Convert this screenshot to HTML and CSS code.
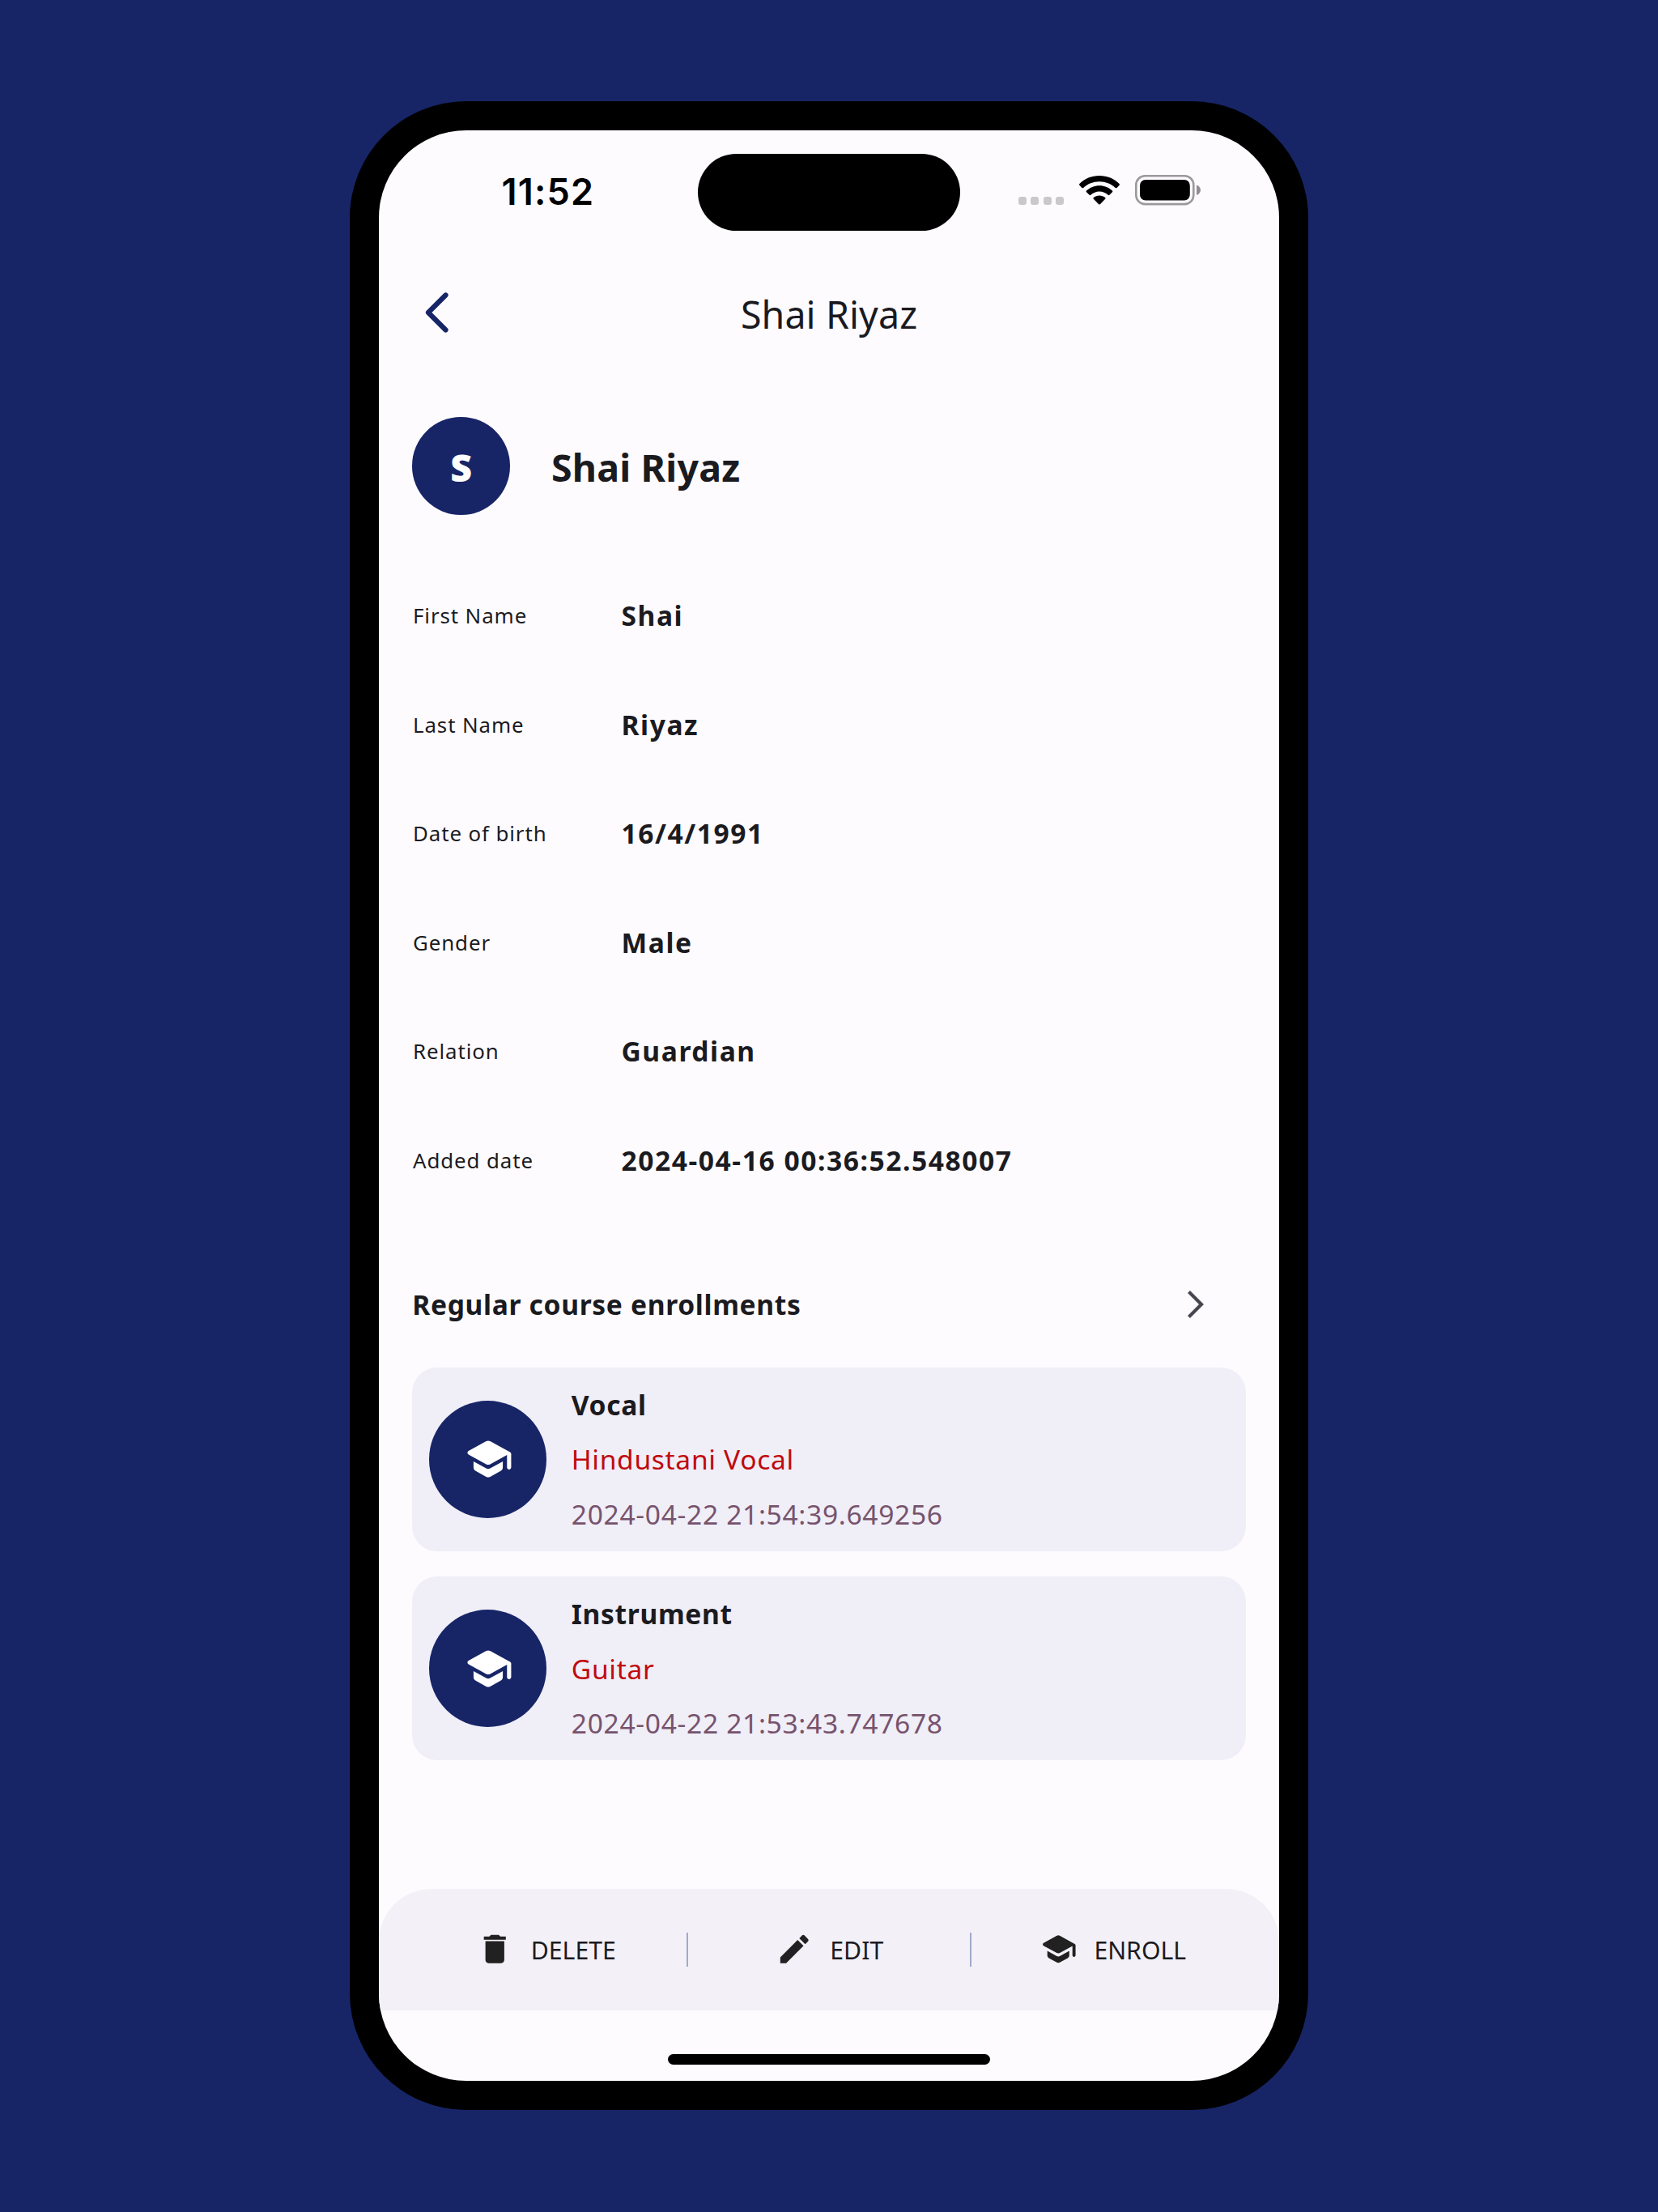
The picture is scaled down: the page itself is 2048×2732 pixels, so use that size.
FILE: index.html
```html
<!DOCTYPE html>
<html lang="en">
<head>
<meta charset="utf-8">
<title>Shai Riyaz</title>
<link rel="stylesheet" href="styles.css">
</head>
<body>
<svg class="defs" aria-hidden="true">
  <symbol id="school" viewBox="0 0 24 24"><path d="M5 13.18v2.81c0 .73.4 1.41 1.04 1.76l5 2.73c.6.33 1.32.33 1.92 0l5-2.73c.64-.35 1.04-1.03 1.04-1.76v-2.81l-6.04 3.3c-.6.33-1.32.33-1.92 0L5 13.18zm6.04-9.66l-8.43 4.6c-.69.38-.69 1.38 0 1.76l8.43 4.6c.6.33 1.32.33 1.92 0L21 10.09V16c0 .55.45 1 1 1s1-.45 1-1V9.59c0-.37-.2-.7-.52-.88l-9.52-5.19a2.04 2.04 0 00-1.92 0z"/></symbol>
</svg>
<main class="phone">
  <div class="screen">
    <div class="island"></div>
    <div class="status">
      <span class="time">11:52</span>
      <div class="indicators">
        <span class="cell"><i></i><i></i><i></i><i></i></span>
        <svg class="wifi" viewBox="0 0 50 36">
          <path d="M25 0C34.6 0 43.300 3.600 49.600 10.100Q50.300 11 49.600 11.800L46.600 14.900Q45.700 15.700 44.800 14.900C39.500 10 32.600 7.200 25 7.200S10.500 10 5.200 14.900Q4.300 15.700 3.400 14.900L.4 11.800Q-.3 11 .4 10.100C6.700 3.600 15.400 0 25 0Z"/>
          <path d="M25 12.200C31.200 12.200 36.800 14.600 41 18.500Q41.800 19.400 41 20.200L37.400 23.800Q36.600 24.500 35.700 23.800C32.800 21.200 29.100 19.500 25 19.500S17.200 21.200 14.300 23.800Q13.400 24.500 12.600 23.800L9 20.200Q8.200 19.400 9 18.500C13.200 14.600 18.800 12.200 25 12.200Z"/>
          <path d="M25 24.400C27.800 24.400 30.200 25.400 32.200 27Q33 27.900 32.200 28.800L25.900 35.200Q25 36 24.100 35.200L17.800 28.800Q17 27.900 17.800 27C19.800 25.400 22.200 24.400 25 24.400Z"/>
        </svg>
        <svg class="battery" viewBox="0 0 81 38">
          <rect x="1.300" y="1.300" width="71" height="34.800" rx="11" fill="none" stroke="#9b999c" stroke-width="2.600"/>
          <rect x="6" y="6" width="61.800" height="25.500" rx="7" fill="#000"/>
          <path d="M76 12.600c3 1 5 3.300 5 6.200s-2 5.200-5 6.200z" fill="#8f8d90"/>
        </svg>
      </div>
    </div>

    <header class="topbar">
      <svg class="back" viewBox="0 0 30 50"><path d="M25.500 3.500 4 25 25.500 46.500" fill="none" stroke="#172567" stroke-width="6.200" stroke-linecap="round" stroke-linejoin="round"/></svg>
      <h1>Shai Riyaz</h1>
    </header>

    <section class="person">
      <div class="avatar">S</div>
      <h2>Shai Riyaz</h2>
    </section>

    <dl class="details">
      <div><dt>First Name</dt><dd>Shai</dd></div>
      <div><dt>Last Name</dt><dd>Riyaz</dd></div>
      <div><dt>Date of birth</dt><dd>16/4/1991</dd></div>
      <div><dt>Gender</dt><dd>Male</dd></div>
      <div><dt>Relation</dt><dd>Guardian</dd></div>
      <div><dt>Added date</dt><dd>2024-04-16 00:36:52.548007</dd></div>
    </dl>

    <div class="section-head">
      <h3>Regular course enrollments</h3>
      <svg class="more" viewBox="0 0 22 36"><path d="M2.500 2.500 18 18 2.500 33.500" fill="none" stroke="#46464f" stroke-width="4.200"/></svg>
    </div>

    <section class="courses">
      <article class="course">
        <div class="badge"><svg><use href="#school"/></svg></div>
        <div class="info"><strong>Vocal</strong><span class="subject">Hindustani Vocal</span><time>2024-04-22 21:54:39.649256</time></div>
      </article>
      <article class="course">
        <div class="badge"><svg><use href="#school"/></svg></div>
        <div class="info"><strong>Instrument</strong><span class="subject">Guitar</span><time>2024-04-22 21:53:43.747678</time></div>
      </article>
    </section>

    <nav class="actions">
      <div class="action"><svg viewBox="0 0 24 24"><path d="M6 19c0 1.100.9 2 2 2h8c1.100 0 2-.9 2-2V7H6v12zM19 4h-3.500l-1-1h-5l-1 1H5v2h14V4z"/></svg><span>DELETE</span></div>
      <div class="action"><svg viewBox="0 0 24 24"><path d="M3 17.250V21h3.750L17.810 9.940l-3.750-3.750L3 17.250zM20.710 7.040c.39-.39.39-1.020 0-1.410l-2.340-2.340c-.39-.39-1.020-.39-1.410 0l-1.830 1.830 3.750 3.750 1.830-1.830z"/></svg><span>EDIT</span></div>
      <div class="action"><svg><use href="#school"/></svg><span>ENROLL</span></div>
    </nav>
    <div class="home"></div>
  </div>
</main>
</body>
</html>
```
FILE: styles.css
```css
* { box-sizing: border-box; margin: 0; padding: 0; }

body {
  width: 2048px;
  height: 2732px;
  overflow: hidden;
  background: #172567;
  color: #1b1b1f;
  font-family: "Noto Sans", sans-serif;
  padding: 125px 0 0 432px;
}

.defs { position: absolute; width: 0; height: 0; }

.phone {
  width: 1184px;
  height: 2481px;
  padding: 36px;
  border-radius: 144px;
  background: #000;
}

.screen {
  position: relative;
  display: flex;
  flex-direction: column;
  height: 2409px;
  overflow: hidden;
  border-radius: 108px;
  background: #fefbff;
}

/* Status bar */
.island {
  position: absolute;
  top: 28.600px;
  left: 393.700px;
  width: 324.600px;
  height: 95.200px;
  border-radius: 48px;
  background: #000;
}
.status {
  display: flex;
  justify-content: space-between;
  height: 153px;
  padding: 46px 97px 0 151.500px;
}
.time {
  font: 600 45px/60px "Inter", sans-serif;
  letter-spacing: 1.200px;
  color: #000;
}
.indicators { display: flex; padding-top: 9px; height: 60px; }
.cell { display: flex; gap: 5.800px; padding-top: 27px; margin-right: 19px; }
.cell i { width: 9.700px; height: 10px; border-radius: 3px; background: #cac8cb; }
.wifi { width: 50px; height: 36px; margin: 1px 19px 0 0; }
.battery { width: 81px; height: 38px; }

/* Title bar */
.topbar {
  display: grid;
  grid-template-columns: 58px 1fr 58px;
  height: 146px;
  align-items: center;
}
.back { width: 30px; height: 50px; margin: 0 0 3px 57px; }
h1 {
  padding-top: 1px;
  font-size: 46.550px;
  font-weight: 400;
  line-height: 64px;
  letter-spacing: .1px;
  text-align: center;
}

/* Person */
.person {
  display: flex;
  align-items: center;
  gap: 51px;
  height: 120.600px;
  margin: 55px 0 0 41.300px;
}
.avatar {
  width: 120.600px;
  height: 120.600px;
  padding-top: 4px;
  border-radius: 50%;
  background: #172567;
  color: #fff;
  font-size: 46.500px;
  font-weight: 900;
  line-height: 116.600px;
  text-align: center;
}
h2 {
  padding-top: 4px;
  font-size: 46.500px;
  font-weight: 700;
  line-height: 64px;
  letter-spacing: .2px;
}

/* Details */
.details { margin: 57.300px 0 0 42px; }
.details div { display: flex; align-items: center; height: 134.550px; }
dt { width: 257.500px; font-size: 25.860px; letter-spacing: .9px; }
dd { font-size: 33.600px; font-weight: 700; letter-spacing: 1.550px; }

/* Enrollments */
.section-head {
  display: flex;
  justify-content: space-between;
  align-items: center;
  height: 156px;
  padding: 0 92px 0 41.300px;
  margin-top: 32.400px;
}
h3 { font-size: 33.600px; font-weight: 700; letter-spacing: .660px; }
.more { width: 22px; height: 36px; }
.courses { display: flex; flex-direction: column; gap: 31px; padding: 0 41.300px; }
.course {
  display: flex;
  align-items: center;
  gap: 31px;
  height: 227.400px;
  padding-left: 20.700px;
  border-radius: 31px;
  background: #f0eef7;
}
.badge {
  display: grid;
  place-items: center;
  width: 144.800px;
  height: 144.800px;
  padding-left: 2px;
  border-radius: 50%;
  background: #172567;
}
.badge svg { width: 62px; height: 62px; fill: #fff; }
.info {
  display: flex;
  flex-direction: column;
  padding-top: 1.500px;
  font-size: 33.600px;
  line-height: 67.300px;
  letter-spacing: .670px;
}
.info strong { font-weight: 700; }
.subject { color: #c00a0e; }
time { color: #77536d; }

/* Bottom actions */
.actions {
  display: flex;
  height: 150px;
  margin-top: auto;
  padding: 0 30.500px 0 31.500px;
  border-radius: 65px 65px 0 0;
  background: #f3f0f7;
}
.action {
  flex: 1;
  display: flex;
  justify-content: center;
  align-items: center;
  gap: 21px;
  background: linear-gradient(#a2a8cb, #a2a8cb) right 54px / 2px 42px no-repeat;
}
.action:last-child { background: none; }
.action svg { width: 46.500px; height: 46.500px; fill: #212121; }
.action span { font-size: 30.200px; line-height: 44px; padding-top: 2px; }
.home {
  width: 398px;
  height: 12.600px;
  margin: 54.300px auto 20.500px;
  border-radius: 7px;
  background: #000;
}
```
